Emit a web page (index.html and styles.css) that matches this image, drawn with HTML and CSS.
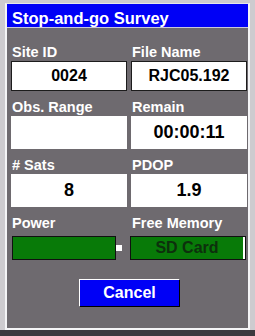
FILE: index.html
```html
<!DOCTYPE html>
<html>
<head>
<meta charset="utf-8">
<link rel="stylesheet" href="styles.css">
</head>
<body>
<div class="window">
  <div class="title">Stop-and-go Survey</div>
  <div class="panel">
    <div class="grid">
      <div class="field">
        <div class="label">Site ID</div>
        <div class="val edit">0024</div>
      </div>
      <div class="field">
        <div class="label">File Name</div>
        <div class="val edit">RJC05.192</div>
      </div>
      <div class="field">
        <div class="label">Obs. Range</div>
        <div class="val tall"></div>
      </div>
      <div class="field">
        <div class="label">Remain</div>
        <div class="val tall">00:00:11</div>
      </div>
      <div class="field">
        <div class="label"># Sats</div>
        <div class="val tall">8</div>
      </div>
      <div class="field">
        <div class="label">PDOP</div>
        <div class="val tall">1.9</div>
      </div>
      <div class="field">
        <div class="label">Power</div>
        <div class="battery">
          <div class="bat-body"></div>
          <div class="bat-nub"></div>
        </div>
      </div>
      <div class="field">
        <div class="label">Free Memory</div>
        <div class="memory"><span class="mem-text">SD Card</span><span class="mem-mark"></span></div>
      </div>
    </div>
    <div class="actions">
      <div class="btn">Cancel</div>
    </div>
  </div>
</div>
<div class="strip"></div>
</body>
</html>
```

FILE: styles.css
```css
html, body {
  margin: 0;
  padding: 0;
}
body {
  width: 255px;
  height: 336px;
  overflow: hidden;
  background: #cdcbcf;
  font-family: "Liberation Sans", Arial, sans-serif;
  display: flex;
  flex-direction: column;
}
.window {
  margin: 3px 0 0 5px;
  width: 241px;
  border-top: 1px solid #e6e6ea;
  border-left: 2px solid #f4f4f6;
  border-right: 2px solid #f4f4f6;
  border-bottom: 2px solid #f4f4f6;
  display: flex;
  flex-direction: column;
}
.title {
  height: 18px;
  padding: 5px 0 0 5px;
  line-height: 18px;
  background: #0000f6;
  color: #ffffff;
  font-weight: bold;
  font-size: 16.5px;
  border-bottom: 1px solid #c9c8dc;
}
.panel {
  background: #6e6a6f;
  height: 300px;
  padding: 16px 1px 0 4px;
  box-sizing: border-box;
}
.grid {
  display: grid;
  grid-template-columns: 116px 116px;
  column-gap: 4px;
  row-gap: 8px;
}
.field {
  display: flex;
  flex-direction: column;
}
.label {
  color: #ffffff;
  font-weight: bold;
  font-size: 14.5px;
  line-height: 16px;
  height: 16px;
  padding-left: 1px;
  margin-bottom: 1px;
  white-space: nowrap;
}
.val {
  background: #ffffff;
  color: #000000;
  font-weight: bold;
  font-size: 16px;
  display: flex;
  align-items: center;
  justify-content: center;
  box-sizing: border-box;
}
.edit {
  height: 30px;
  border: 1px solid #1c1c1c;
}
.tall {
  height: 33px;
  font-size: 18px;
}
.battery {
  display: flex;
  align-items: center;
  margin-top: 4px;
  padding-left: 1px;
}
.bat-body {
  width: 104px;
  height: 24px;
  box-sizing: border-box;
  background: #087a08;
  border: 1px solid #101010;
}
.bat-nub {
  width: 6px;
  height: 6px;
  background: #ffffff;
}
.memory {
  margin-top: 4px;
  margin-left: -1px;
  height: 24px;
  width: 116px;
  box-sizing: border-box;
  background: #087a08;
  border: 1px solid #101010;
  display: flex;
  align-items: center;
}
.mem-text {
  flex: 1;
  text-align: center;
  color: #0d300d;
  font-size: 16px;
  font-weight: bold;
  line-height: 22px;
}
.mem-mark {
  width: 2px;
  height: 22px;
  background: #ffffff;
}
.actions {
  display: flex;
  justify-content: center;
  margin-top: 19px;
  padding-left: 1px;
}
.btn {
  width: 101px;
  height: 28px;
  box-sizing: border-box;
  background: #0000f6;
  color: #ffffff;
  font-weight: bold;
  font-size: 16px;
  border-top: 1px solid #ffffff;
  border-left: 1px solid #ffffff;
  border-right: 1px solid #000000;
  border-bottom: 1px solid #000000;
  display: flex;
  align-items: center;
  justify-content: center;
}
.strip {
  flex: 1;
  background: #3c3a3e;
  margin-top: 0;
}
```
